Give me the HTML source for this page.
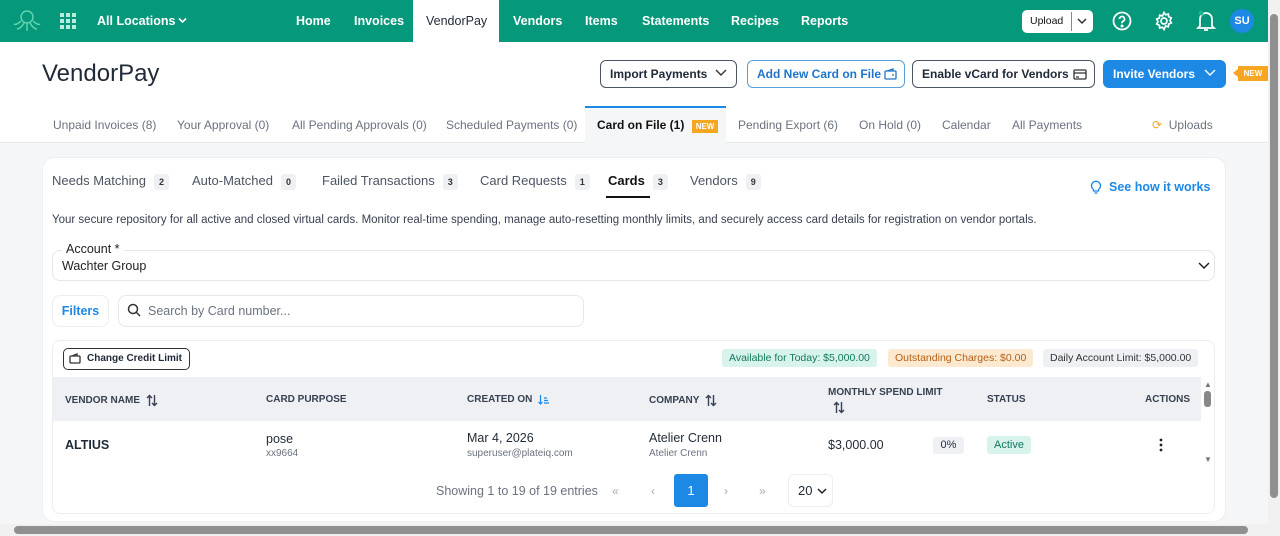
<!DOCTYPE html>
<html><head><meta charset="utf-8"><style>
*{box-sizing:border-box;margin:0;padding:0}
body{width:1280px;height:536px;overflow:hidden;font-family:"Liberation Sans",sans-serif;background:#f5f6f8;position:relative;color:#1f2937}
.a{position:absolute;white-space:nowrap}
.nav{left:0;top:0;width:1268px;height:42px;background:#05987a}
.nv{color:#fff;font-weight:bold;font-size:12.5px;top:14px}
.btn{border:1px solid #4b5563;border-radius:6px;height:28px;top:60px;font-size:12px;font-weight:bold;line-height:26px;padding-left:9px;background:#fff}
.btn svg{position:absolute;top:8px}
.tab{font-size:12px;color:#6b7280;top:118px}
.st{font-size:13px;color:#4b5563;top:173px}
.bd{display:inline-block;background:#eef0f3;border-radius:3px;font-size:9px;font-weight:bold;color:#333;padding:3px 5px;margin-left:8px;vertical-align:middle}
.th{font-size:10px;font-weight:bold;color:#374151;top:394px}
.pill{top:349px;height:18px;font-size:10.5px;line-height:18px;padding:0 7px;border-radius:3px}
.so{display:inline-block;vertical-align:middle;margin-left:6px}
</style></head><body>
<div class="a" style="left:0;top:0;width:1268px;height:143px;background:#fff"></div>
<div class="a nav"></div>
<svg class="a" style="left:13px;top:9px" width="28" height="24" viewBox="0 0 28 24" fill="none" stroke="#5fd3ae" stroke-width="1.5"><circle cx="14" cy="8" r="6"/><path d="M8 12c-3 3-6 4-7 3M20 12c3 3 6 4 7 3M11 14c-2 4-5 6-7 6M17 14c2 4 5 6 7 6M14 14v8"/></svg>
<svg class="a" style="left:60px;top:13px" width="16" height="16" fill="#b9ecdc"><rect x="0" y="0" width="4" height="4"/><rect x="6" y="0" width="4" height="4"/><rect x="12" y="0" width="4" height="4"/><rect x="0" y="6" width="4" height="4"/><rect x="6" y="6" width="4" height="4"/><rect x="12" y="6" width="4" height="4"/><rect x="0" y="12" width="4" height="4"/><rect x="6" y="12" width="4" height="4"/><rect x="12" y="12" width="4" height="4"/></svg>
<div class="a nv" style="left:97px">All Locations</div>
<svg class="a" style="left:178px;top:17px" width="9" height="7" fill="none" stroke="#fff" stroke-width="1.6"><path d="M1 1.5l3.5 3.5 3.5-3.5"/></svg>
<div class="a nv" style="left:296px">Home</div>
<div class="a nv" style="left:354px">Invoices</div>
<div class="a" style="left:413px;top:0;width:86px;height:42px;background:#fff"></div>
<div class="a nv" style="left:426px;color:#1f2937;font-weight:normal">VendorPay</div>
<div class="a nv" style="left:513px">Vendors</div>
<div class="a nv" style="left:585px">Items</div>
<div class="a nv" style="left:642px">Statements</div>
<div class="a nv" style="left:731px">Recipes</div>
<div class="a nv" style="left:801px">Reports</div>
<div class="a" style="left:1022px;top:10px;width:71px;height:23px;background:#fff;border-radius:5px;font-size:10.5px;line-height:23px;padding-left:8px;color:#111">Upload<span style="position:absolute;left:49px;top:2px;height:19px;border-left:1px solid #888"></span></div>
<svg class="a" style="left:1077px;top:18px" width="10" height="7" fill="none" stroke="#333" stroke-width="1.5"><path d="M1 1l4 4 4-4"/></svg>
<svg class="a" style="left:1112px;top:11px" width="20" height="20" fill="none" stroke="#fff" stroke-width="1.8"><circle cx="10" cy="10" r="8.5"/><path d="M7.5 8a2.5 2.5 0 1 1 3.5 2.3c-1 .4-1 1-1 2"/><circle cx="10" cy="15" r=".6" fill="#fff"/></svg>
<svg class="a" style="left:1154px;top:11px" width="20" height="20" fill="none" stroke="#fff" stroke-width="1.7"><circle cx="10" cy="10" r="3"/><path d="M10 1.5l1.6 2.3 2.7-.8.4 2.8 2.6 1.1-1.3 2.5 1.3 2.5-2.6 1.1-.4 2.8-2.7-.8L10 18.5l-1.6-2.3-2.7.8-.4-2.8-2.6-1.1L4 10.6 2.7 8.1l2.6-1.1.4-2.8 2.7.8z"/></svg>
<svg class="a" style="left:1196px;top:10px" width="20" height="22" fill="none" stroke="#fff" stroke-width="1.7"><path d="M4 16V9a6 6 0 0 1 12 0v7l2 2H2zM8 20h4"/><circle cx="5" cy="3" r="2.5" fill="#16b48f" stroke="none"/></svg>
<div class="a" style="left:1230px;top:9px;width:24px;height:24px;border-radius:12px;background:#1e88e5;color:#fff;font-size:11px;font-weight:bold;text-align:center;line-height:24px">SU</div>
<div class="a" style="left:1268px;top:0;width:12px;height:536px;background:#f0f0f0"></div>
<div class="a" style="left:1270px;top:14px;width:8px;height:484px;background:#909090;border-radius:4px"></div>
<div class="a" style="left:42px;top:60px;font-size:24px;color:#1f2937">VendorPay</div>
<div class="a btn" style="left:600px;width:137px">Import Payments<svg style="left:114px" width="12" height="8" fill="none" stroke="#333" stroke-width="1.4"><path d="M1 1l5 5 5-5"/></svg></div>
<div class="a btn" style="left:747px;width:158px;border-color:#5aa0d8;color:#1d75c9">Add New Card on File<svg style="left:136px;top:7px" width="13" height="12" fill="none" stroke="#1d75c9" stroke-width="1.3"><rect x="1" y="3" width="11" height="8" rx="1"/><path d="M3 3l6-2v2M8 7h2"/></svg></div>
<div class="a btn" style="left:912px;width:183px">Enable vCard for Vendors<svg style="left:160px" width="14" height="11" fill="none" stroke="#333" stroke-width="1.3"><rect x="1" y="1" width="12" height="9" rx="1"/><path d="M1 4h12M3 8h3"/></svg></div>
<div class="a btn" style="left:1103px;width:123px;background:#1e88e5;border-color:#1e88e5;color:#fff">Invite Vendors<svg style="left:100px" width="12" height="8" fill="none" stroke="#fff" stroke-width="1.4"><path d="M1 1l5 5 5-5"/></svg></div>
<div class="a" style="left:1238px;top:66px;width:30px;height:15px;background:#f5a623;color:#fff;font-size:8px;font-weight:bold;line-height:15px;text-align:center">NEW</div>
<div class="a" style="left:1233px;top:69px;width:0;height:0;border-top:4px solid transparent;border-bottom:4px solid transparent;border-right:5px solid #f5a623"></div>
<div class="a" style="left:0;top:142px;width:1268px;height:1px;background:#e5e7eb"></div>
<div class="a tab" style="left:53px">Unpaid Invoices (8)</div>
<div class="a tab" style="left:177px">Your Approval (0)</div>
<div class="a tab" style="left:292px">All Pending Approvals (0)</div>
<div class="a tab" style="left:446px">Scheduled Payments (0)</div>
<div class="a" style="left:585px;top:106px;width:141px;height:37px;background:#f5f6f8;border-top:2px solid #1e88e5"></div>
<div class="a tab" style="left:597px;color:#111;font-weight:bold">Card on File (1) <span style="background:#f5a623;color:#fff;font-size:8px;padding:2px 4px;margin-left:4px">NEW</span></div>
<div class="a tab" style="left:738px">Pending Export (6)</div>
<div class="a tab" style="left:859px">On Hold (0)</div>
<div class="a tab" style="left:942px">Calendar</div>
<div class="a tab" style="left:1012px">All Payments</div>
<div class="a tab" style="left:1152px"><span style="color:#f5a623">⟳</span> &nbsp;Uploads</div>
<div class="a" style="left:42px;top:157px;width:1184px;height:365px;background:#fff;border-radius:12px;border:1px solid #eceef1"></div>
<div class="a st" style="left:52px">Needs Matching<span class="bd">2</span></div>
<div class="a st" style="left:192px">Auto-Matched<span class="bd">0</span></div>
<div class="a st" style="left:322px">Failed Transactions<span class="bd">3</span></div>
<div class="a st" style="left:480px">Card Requests<span class="bd">1</span></div>
<div class="a st" style="left:608px;color:#111;font-weight:bold">Cards<span class="bd">3</span></div>
<div class="a" style="left:606px;top:196px;width:44px;height:2px;background:#111"></div>
<div class="a st" style="left:690px">Vendors<span class="bd">9</span></div>
<svg class="a" style="left:1090px;top:180px" width="12" height="14" fill="none" stroke="#1e88e5" stroke-width="1.3"><path d="M3.5 9.5a4.5 4.5 0 1 1 5 0V11h-5zM4.5 13h3"/></svg>
<div class="a" style="left:1109px;top:180px;font-size:12.5px;font-weight:bold;color:#1e88e5">See how it works</div>
<div class="a" style="left:52px;top:214px;font-size:11.5px;color:#374151">Your secure repository for all active and closed virtual cards. Monitor real-time spending, manage auto-resetting monthly limits, and securely access card details for registration on vendor portals.</div>
<div class="a" style="left:52px;top:250px;width:1163px;height:31px;border:1px solid #e5e7eb;border-radius:8px"></div>
<div class="a" style="left:62px;top:242px;background:#fff;padding:0 4px;font-size:12.5px;color:#222">Account *</div>
<div class="a" style="left:62px;top:259px;font-size:12.5px;color:#222">Wachter Group</div>
<svg class="a" style="left:1198px;top:262px" width="12" height="8" fill="none" stroke="#222" stroke-width="1.5"><path d="M1 1l5 5 5-5"/></svg>
<div class="a" style="left:52px;top:295px;width:57px;height:32px;border:1px solid #eceef1;border-radius:8px;color:#1e88e5;font-size:12.5px;font-weight:bold;text-align:center;line-height:30px">Filters</div>
<div class="a" style="left:118px;top:295px;width:466px;height:32px;border:1px solid #e5e7eb;border-radius:8px"></div>
<svg class="a" style="left:127px;top:303px" width="14" height="14" fill="none" stroke="#333" stroke-width="1.5"><circle cx="6" cy="6" r="4.5"/><path d="M9.5 9.5l3.5 3.5"/></svg>
<div class="a" style="left:148px;top:304px;font-size:12.5px;color:#6b7280">Search by Card number...</div>
<div class="a" style="left:52px;top:340px;width:1163px;height:174px;border:1px solid #eceef1;border-radius:8px"></div>
<div class="a" style="left:63px;top:348px;width:127px;height:22px;border:1px solid #333;border-radius:5px;font-size:10px;font-weight:bold;line-height:20px;padding-left:23px">Change Credit Limit</div>
<svg class="a" style="left:69px;top:353px" width="12" height="11" fill="none" stroke="#333" stroke-width="1.3"><rect x="1" y="3" width="10" height="7" rx="1"/><path d="M3 3l5-2v2"/></svg>
<div class="a pill" style="left:722px;background:#d8f3ec;color:#11795f">Available for Today: $5,000.00</div>
<div class="a pill" style="left:888px;background:#fde9cf;color:#b45f16">Outstanding Charges: $0.00</div>
<div class="a pill" style="left:1043px;background:#eef0f4;color:#333">Daily Account Limit: $5,000.00</div>
<div class="a" style="left:53px;top:377px;width:1148px;height:44px;background:#eef0f4"></div>
<div class="a th" style="left:65px">VENDOR NAME<svg class="so" width="12" height="13" fill="none" stroke="#374151" stroke-width="1.4"><path d="M3.5 12V1.5M1 4l2.5-2.5L6 4M8.5 1v10.5M6 9l2.5 2.5L11 9"/></svg></div>
<div class="a th" style="left:266px">CARD PURPOSE</div>
<div class="a th" style="left:467px">CREATED ON<svg class="so" width="12" height="11" fill="none" stroke="#1e88e5" stroke-width="1.2"><path d="M2.5 1v9M0.5 8l2 2 2-2M6 4h3M6 6.5h4M6 9h5"/></svg></div>
<div class="a th" style="left:649px">COMPANY<svg class="so" width="12" height="13" fill="none" stroke="#374151" stroke-width="1.4"><path d="M3.5 12V1.5M1 4l2.5-2.5L6 4M8.5 1v10.5M6 9l2.5 2.5L11 9"/></svg></div>
<div class="a th" style="left:828px;top:387px">MONTHLY SPEND LIMIT</div>
<svg class="a" style="left:833px;top:401px" width="12" height="13" fill="none" stroke="#374151" stroke-width="1.4"><path d="M3.5 12V1.5M1 4l2.5-2.5L6 4M8.5 1v10.5M6 9l2.5 2.5L11 9"/></svg>
<div class="a th" style="left:987px">STATUS</div>
<div class="a th" style="left:1145px">ACTIONS</div>
<div class="a" style="left:1204px;top:380px;font-size:8px;color:#777">▲</div>
<div class="a" style="left:1204px;top:391px;width:7px;height:16px;background:#888;border-radius:3px"></div>
<div class="a" style="left:1204px;top:455px;font-size:8px;color:#777">▼</div>
<div class="a" style="left:65px;top:438px;font-size:12.5px;font-weight:bold">ALTIUS</div>
<div class="a" style="left:266px;top:432px;font-size:12.5px">pose</div>
<div class="a" style="left:266px;top:448px;font-size:10px;color:#6b7280">xx9664</div>
<div class="a" style="left:467px;top:431px;font-size:12.5px">Mar 4, 2026</div>
<div class="a" style="left:467px;top:448px;font-size:10px;color:#6b7280">superuser@plateiq.com</div>
<div class="a" style="left:649px;top:431px;font-size:12.5px">Atelier Crenn</div>
<div class="a" style="left:649px;top:448px;font-size:10px;color:#6b7280">Atelier Crenn</div>
<div class="a" style="left:828px;top:438px;font-size:12.5px">$3,000.00</div>
<div class="a" style="left:933px;top:437px;width:31px;height:17px;background:#eef0f4;border-radius:3px;font-size:11px;text-align:center;line-height:17px">0%</div>
<div class="a" style="left:987px;top:436px;width:44px;height:18px;background:#d8f3ec;color:#11795f;border-radius:3px;font-size:11px;text-align:center;line-height:18px">Active</div>
<svg class="a" style="left:1158px;top:438px" width="6" height="14" fill="#222"><circle cx="3" cy="2" r="1.4"/><circle cx="3" cy="7" r="1.4"/><circle cx="3" cy="12" r="1.4"/></svg>
<div class="a" style="left:436px;top:484px;font-size:12.5px;color:#6b7280">Showing 1 to 19 of 19 entries</div>
<div class="a" style="left:612px;top:484px;font-size:12px;color:#aaa">«</div>
<div class="a" style="left:651px;top:484px;font-size:12px;color:#aaa">‹</div>
<div class="a" style="left:674px;top:474px;width:34px;height:33px;background:#1e88e5;border-radius:3px;color:#fff;font-size:13px;text-align:center;line-height:33px">1</div>
<div class="a" style="left:724px;top:484px;font-size:12px;color:#aaa">›</div>
<div class="a" style="left:759px;top:484px;font-size:12px;color:#aaa">»</div>
<div class="a" style="left:788px;top:474px;width:45px;height:33px;border:1px solid #eceef1;border-radius:6px;font-size:13px;line-height:31px;padding-left:9px">20</div>
<svg class="a" style="left:817px;top:488px" width="10" height="7" fill="none" stroke="#222" stroke-width="1.5"><path d="M1 1l4 4 4-4"/></svg>
<div class="a" style="left:0;top:524px;width:1268px;height:12px;background:#f0f0f0"></div>
<div class="a" style="left:14px;top:526px;width:1234px;height:8px;background:#909090;border-radius:4px"></div>
</body></html>
